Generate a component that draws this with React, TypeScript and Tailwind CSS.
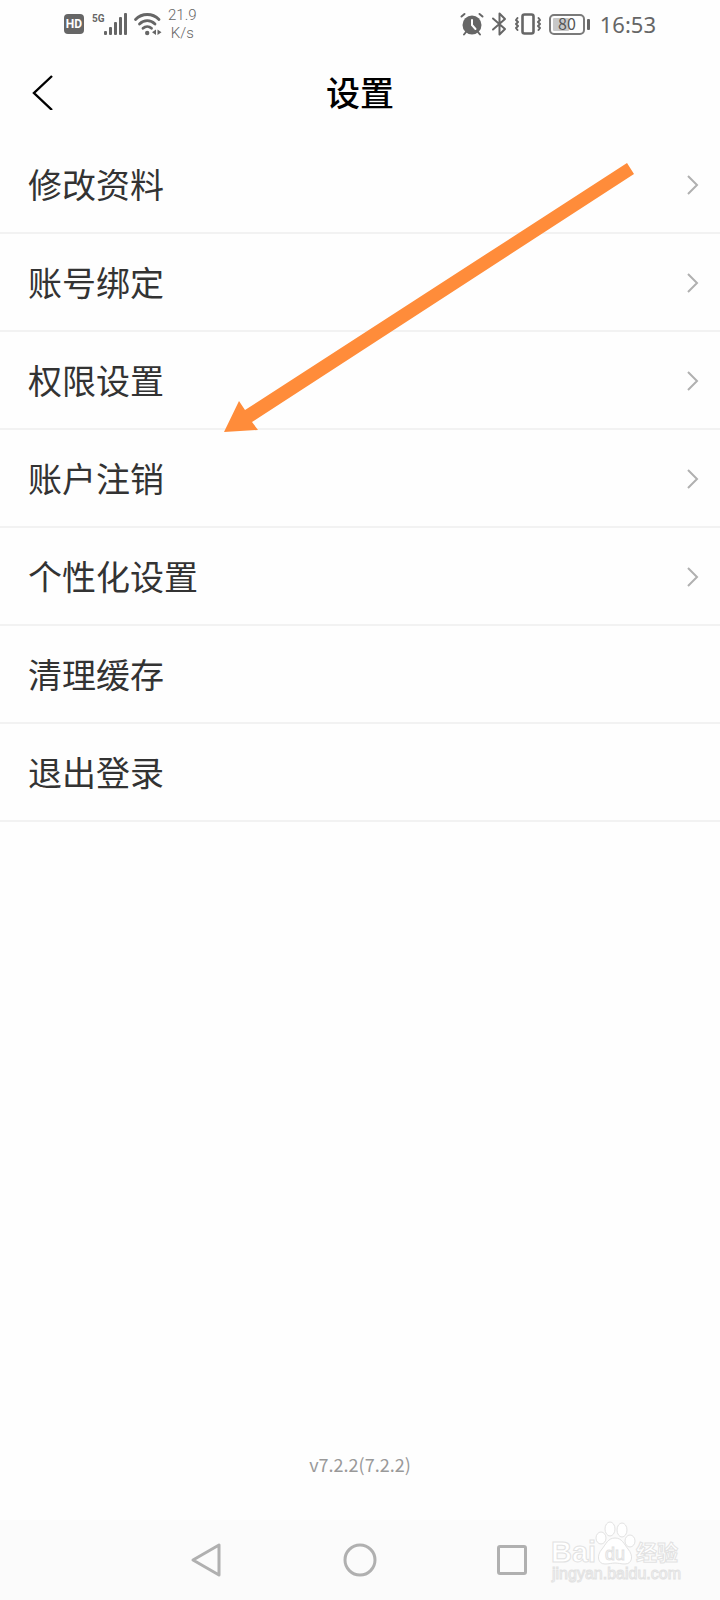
import React from "react";

const items = [
  { label: "修改资料", arrow: true },
  { label: "账号绑定", arrow: true },
  { label: "权限设置", arrow: true },
  { label: "账户注销", arrow: true },
  { label: "个性化设置", arrow: true },
  { label: "清理缓存", arrow: false },
  { label: "退出登录", arrow: false },
];

function StatusBar() {
  return (
    <div className="flex h-12 items-center justify-between px-16 text-[#666]">
      {/* Left */}
      <div className="flex items-center">
        <span className="flex h-5 w-5 items-center justify-center rounded bg-[#666] font-['Roboto',sans-serif] text-xs font-bold text-white">
          HD
        </span>
        <svg className="ml-2 h-6 w-9" viewBox="0 0 36 24" fill="currentColor">
          <text x="0" y="10" fontSize="10" fontWeight="700" fontFamily="Roboto, sans-serif">
            5G
          </text>
          <rect x="12" y="19" width="3" height="4" rx="1" />
          <rect x="17" y="15" width="3" height="8" rx="1" />
          <rect x="22" y="10" width="3" height="13" rx="1" />
          <rect x="27" y="5" width="3" height="18" rx="1" />
          <rect x="32" y="1" width="3" height="22" rx="1" />
        </svg>
        <svg className="ml-1 h-6 w-8" viewBox="0 0 32 24" fill="none" stroke="currentColor" strokeWidth="2.8" strokeLinecap="round">
          <path d="M3.5 7.5C10 .8 20.5 .8 27 7.5" />
          <path d="M7.5 12c4.5-4.4 11-4.4 15.5 0" />
          <path d="M11 16.3c2.5-2.3 6-2.3 8.5 0" />
          <circle cx="15.2" cy="21" r="2.2" fill="currentColor" stroke="none" />
          <path d="M24 17.5v5.5l-4-2.7zM25.5 17.5v5.5l4-2.7z" fill="currentColor" stroke="none" />
        </svg>
        <div className="ml-1 text-center font-['Roboto',sans-serif] text-[15px] font-light leading-[18px]">
          <p>21.9</p>
          <p>K/s</p>
        </div>
      </div>

      {/* Right */}
      <div className="flex items-center">
        <svg className="h-6 w-6" viewBox="0 0 24 24" fill="none" stroke="currentColor" strokeWidth="2" strokeLinecap="round">
          <circle cx="12" cy="13" r="9.5" fill="currentColor" stroke="none" />
          <path d="M1.5 4.5l3-2.5M22.5 4.5l-3-2.5M6 20l-2 2.5M18 20l2 2.5" />
          <path d="M12 8v5l3.5 4" stroke="#fff" strokeWidth="2" />
        </svg>
        <svg className="ml-1 h-6 w-6" viewBox="0 0 24 24" fill="none" stroke="currentColor" strokeWidth="2" strokeLinejoin="round" strokeLinecap="round">
          <path d="M5 6.5l12 10.5-5.5 5.5v-21l5.5 5.5-12 10.5" />
        </svg>
        <svg className="ml-0.5 h-6 w-7" viewBox="0 0 28 24" fill="none" stroke="currentColor" strokeLinecap="round" strokeLinejoin="round">
          <rect x="8.5" y="2.5" width="11" height="19" rx="2" strokeWidth="2.6" />
          <path d="M3.5 6l-1.500 2 2 2-2 2 2 2-2 2 1.500 2M24.500 6l1.500 2-2 2 2 2-2 2 2 2-1.500 2" strokeWidth="2" />
        </svg>
        <svg className="ml-1.5 h-6 w-11" viewBox="0 0 44 24" fill="none">
          <rect x="2" y="3" width="34" height="19" rx="4" stroke="#7a7a7a" strokeWidth="2" />
          <rect x="5" y="6" width="16" height="13" rx="1" fill="#c8c8c8" />
          <rect x="39" y="7" width="3" height="11" rx="1" fill="currentColor" />
          <text x="19" y="18" textAnchor="middle" fontSize="16" fontFamily="Noto Sans CJK SC, sans-serif" fill="#555">
            80
          </text>
        </svg>
        <span className="ml-2 font-['Noto_Sans',sans-serif] text-[22px]">16:53</span>
      </div>
    </div>
  );
}

function Header() {
  return (
    <header className="relative flex h-[88px] items-center justify-center">
      <button aria-label="返回" className="absolute left-7 p-1">
        <svg className="h-9 w-6" viewBox="0 0 24 36" fill="none" stroke="#000" strokeWidth="2.4">
          <path d="M20 2L2 19l18 17" />
        </svg>
      </button>
      <h1 className="font-['KaiTi','Noto_Sans_CJK_SC',sans-serif] text-[34px] font-medium leading-10 text-black">设置</h1>
    </header>
  );
}

function SettingRow({ label, arrow }: { label: string; arrow: boolean }) {
  return (
    <li className="border-b-2 border-[#f2f2f2]">
      <button className="flex h-24 w-full items-center justify-between pb-0.5 pl-7 pr-5 text-left text-[34px] text-[#333]">
        <span>{label}</span>
        {arrow && (
          <svg className="h-7 w-4" viewBox="0 0 16 28" fill="none" stroke="#b0b0b0" strokeWidth="2">
            <path d="M4 7l9 9-9 9" />
          </svg>
        )}
      </button>
    </li>
  );
}

function Watermark() {
  return (
    <svg className="absolute bottom-0 right-8 h-20 w-36" viewBox="0 0 144 80" fill="#fff" stroke="#e2e2e2" strokeWidth="1">
      <text x="7" y="42" fontSize="29" fontWeight="700" fontFamily="Liberation Sans, Arial, sans-serif">Bai</text>
      <path d="M71 18c7 0 9 6 13 11 6 7 4 15-3 15-4 0-7-1-10-1s-6 1-10 1c-7 0-9-8-3-15 4-5 6-11 13-11z" />
      <ellipse cx="57" cy="18" rx="5" ry="6" />
      <ellipse cx="66" cy="9" rx="5" ry="7" />
      <ellipse cx="78" cy="10" rx="5" ry="7" />
      <ellipse cx="86" cy="21" rx="5" ry="6" />
      <text x="61" y="40" fontSize="18" fontFamily="Liberation Sans, Arial, sans-serif">du</text>
      <text x="92" y="40" fontSize="21" fontWeight="700" fontFamily="Noto Sans CJK SC, sans-serif">经验</text>
      <text x="8" y="59" fontSize="16" fontFamily="Liberation Sans, Arial, sans-serif">jingyan.baidu.com</text>
    </svg>
  );
}

function NavBar() {
  return (
    <nav className="relative flex h-20 items-center justify-center bg-[#fbfbfb]">
      <button aria-label="后退" className="flex w-38 justify-center">
        <svg className="h-10 w-10" viewBox="0 0 40 40" fill="none" stroke="#b0b0b0" strokeWidth="3" strokeLinejoin="round">
          <path d="M31 5v30L5 20z" />
        </svg>
      </button>
      <button aria-label="主页" className="flex w-38 justify-center">
        <svg className="h-10 w-10" viewBox="0 0 40 40" fill="none" stroke="#b0b0b0" strokeWidth="3">
          <circle cx="20" cy="20" r="15" />
        </svg>
      </button>
      <button aria-label="最近任务" className="flex w-38 justify-center">
        <svg className="h-10 w-10" viewBox="0 0 40 40" fill="none" stroke="#b0b0b0" strokeWidth="3">
          <rect x="6.5" y="6.5" width="27" height="27" rx="1.5" />
        </svg>
      </button>
      <Watermark />
    </nav>
  );
}

function App() {
  return (
    <div className="relative flex min-h-screen flex-col bg-[#fefefe] font-['Noto_Sans_CJK_SC',sans-serif]">
      <StatusBar />
      <Header />
      <ul>
        {items.map((item) => (
          <SettingRow key={item.label} label={item.label} arrow={item.arrow} />
        ))}
      </ul>
      <p className="mt-auto pb-11 text-center text-lg leading-6 text-[#999]">v7.2.2(7.2.2)</p>
      <NavBar />

      {/* Pointer arrow over the list */}
      <svg className="pointer-events-none absolute left-[224px] top-[163px] h-[270px] w-[410px]" viewBox="0 0 410 270" fill="#ff8c3a">
        <path d="M403 0L410 11L28 259L34 267L0 269L15 238L21 247Z" />
      </svg>
    </div>
  );
}

export default App;
